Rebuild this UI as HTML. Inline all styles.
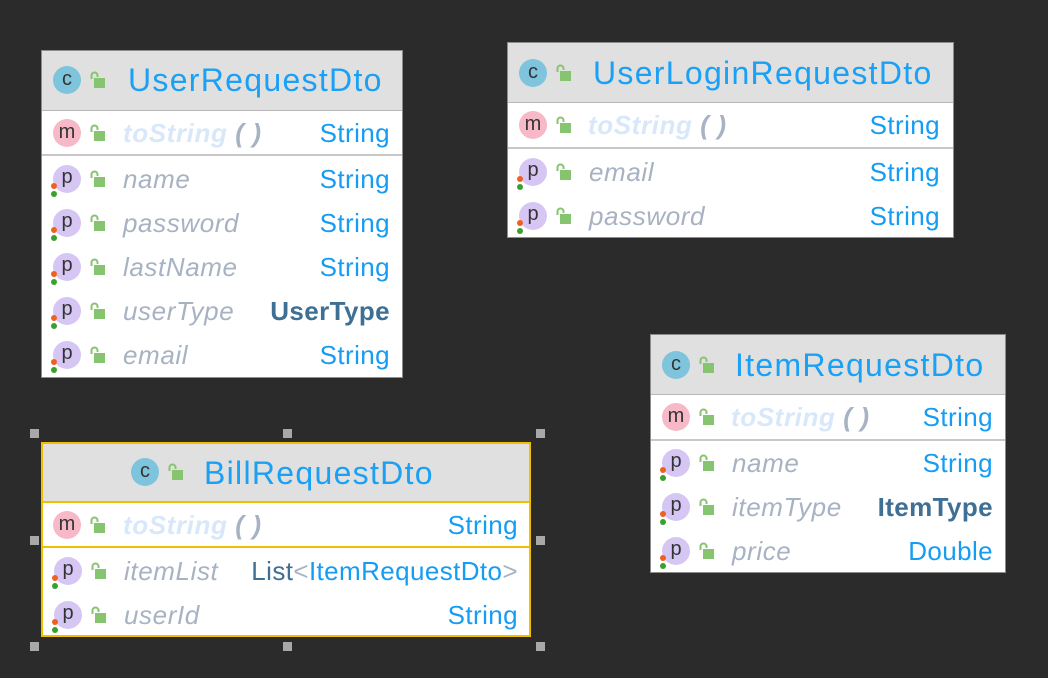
<!DOCTYPE html><html><head><style>
body{margin:0;width:1048px;height:678px;background:#2b2b2b;position:relative;overflow:hidden;font-family:"Liberation Sans",sans-serif}
.box{position:absolute;background:#fff;border:1px solid #8c8c8c;box-sizing:border-box}
.hd{position:absolute;left:0;right:0;top:0;background:#e0e0e0;border-bottom:1px solid #b8b8b8}
.t{position:absolute;font-size:32px;letter-spacing:1.3px;color:#1aa0f5;white-space:nowrap}
.row{position:absolute;left:0;right:0;height:44px}
.sep{position:absolute;left:0;right:0;height:2px;background:#c8c8c8}
.ic{position:absolute;width:28px;height:28px;border-radius:50%;font-size:20px;color:#333;text-align:center;line-height:27px}
.c{background:#7dc4dc}.m{background:#f7b8c8}.p{background:#d6c6f4}
.dot{position:absolute;width:6px;height:6px;border-radius:50%}
.lk{position:absolute;width:16px;height:18px}
.nm{position:absolute;font-size:26px;letter-spacing:0.6px;font-style:italic;color:#a7b2c2;white-space:nowrap}
.ts{font-weight:bold;color:#d8e8fa}
.ty{position:absolute;font-size:26px;letter-spacing:0.4px;color:#159cf3;white-space:nowrap}
.b{font-weight:bold;color:#3e6f94}
.h{position:absolute;width:9px;height:9px;background:#a8a8a8}
</style></head><body>
<svg width="0" height="0" style="position:absolute"><defs><g id="L"><path d="M2.5 8V4.5a3 3 0 0 1 6 0V6" fill="none" stroke="#87c470" stroke-width="2"/><rect x="5" y="7" width="11" height="10" fill="#87c470"/></g></defs></svg>

<div class="box" style="left:41px;top:50px;width:362px;height:328px">
 <div class="hd" style="height:59px"><div class="ic c" style="left:11px;top:15px">c</div><svg class="lk" style="left:47px;top:20px"><use href="#L"/></svg><div class="t" style="left:86px;top:11px">UserRequestDto</div></div>
 <div class="row" style="top:60px"><div class="ic m" style="left:11px;top:8px">m</div><svg class="lk" style="left:47px;top:13px"><use href="#L"/></svg><div class="nm ts" style="left:81px;top:7px">toString<span style="color:#a7b2c2"> ( )</span></div><div class="ty" style="right:12px;top:7px">String</div></div>
 <div class="sep" style="top:103px"></div>
</div>
<div class="box" style="left:507px;top:42px;width:447px;height:196px">
 <div class="hd" style="height:59px"><div class="ic c" style="left:11px;top:16px">c</div><svg class="lk" style="left:47px;top:21px"><use href="#L"/></svg><div class="t" style="left:85px;top:12px">UserLoginRequestDto</div></div>
 <div class="row" style="top:60px"><div class="ic m" style="left:11px;top:8px">m</div><svg class="lk" style="left:47px;top:13px"><use href="#L"/></svg><div class="nm ts" style="left:80px;top:7px">toString<span style="color:#a7b2c2"> ( )</span></div><div class="ty" style="right:13px;top:7px">String</div></div>
 <div class="sep" style="top:104px"></div>
</div>
<div class="box" style="left:650px;top:334px;width:356px;height:239px">
 <div class="hd" style="height:59px"><div class="ic c" style="left:11px;top:16px">c</div><svg class="lk" style="left:47px;top:21px"><use href="#L"/></svg><div class="t" style="left:84px;top:12px">ItemRequestDto</div></div>
 <div class="row" style="top:60px"><div class="ic m" style="left:11px;top:8px">m</div><svg class="lk" style="left:47px;top:13px"><use href="#L"/></svg><div class="nm ts" style="left:80px;top:7px">toString<span style="color:#a7b2c2"> ( )</span></div><div class="ty" style="right:12px;top:7px">String</div></div>
 <div class="sep" style="top:104px"></div>
</div>
<div class="box" style="left:41px;top:442px;width:490px;height:195px;border:2px solid #f0c000">
 <div class="hd" style="height:57px;border-bottom:2px solid #f0c000"><div class="ic c" style="left:88px;top:14px">c</div><svg class="lk" style="left:124px;top:19px"><use href="#L"/></svg><div class="t" style="left:161px;top:11px">BillRequestDto</div></div>
 <div class="row" style="top:59px"><div class="ic m" style="left:10px;top:8px">m</div><svg class="lk" style="left:46px;top:13px"><use href="#L"/></svg><div class="nm ts" style="left:80px;top:7px">toString<span style="color:#a7b2c2"> ( )</span></div><div class="ty" style="right:11px;top:7px">String</div></div>
 <div class="sep" style="top:102px;background:#f0c000"></div>
</div>
<div class="h" style="left:30px;top:429px"></div><div class="h" style="left:283px;top:429px"></div><div class="h" style="left:536px;top:429px"></div>
<div class="h" style="left:30px;top:536px"></div><div class="h" style="left:536px;top:536px"></div>
<div class="h" style="left:30px;top:642px"></div><div class="h" style="left:283px;top:642px"></div><div class="h" style="left:536px;top:642px"></div>
<script>
function f(box,top,rows,r){var b=document.querySelectorAll('.box')[box];rows.forEach(function(x,i){var d=document.createElement('div');d.className='row';d.style.top=(top+i*44)+'px';d.innerHTML='<div class="ic p" style="left:11px;top:8px;line-height:25px">p</div><div class="dot" style="left:9px;top:26px;background:#f06020"></div><div class="dot" style="left:9px;top:34px;background:#3aa030"></div><svg class="lk" style="left:47px;top:13px"><use href="#L"/></svg><div class="nm" style="left:81px;top:7px">'+x[0]+'</div><div class="ty'+(x[2]?' b':'')+'" style="right:'+r+'px;top:7px">'+x[1]+'</div>';b.appendChild(d);});}
f(0,106,[['name','String'],['password','String'],['lastName','String'],['userType','UserType',1],['email','String']],12);
f(1,107,[['email','String'],['password','String']],13);
f(2,106,[['name','String'],['itemType','ItemType',1],['price','Double']],12);
f(3,105,[['itemList','<span style="color:#3e6f94">List</span><span style="color:#a7b2c2">&lt;</span>ItemRequestDto<span style="color:#a7b2c2">&gt;</span>'],['userId','String']],11);
</script>
</body></html>
